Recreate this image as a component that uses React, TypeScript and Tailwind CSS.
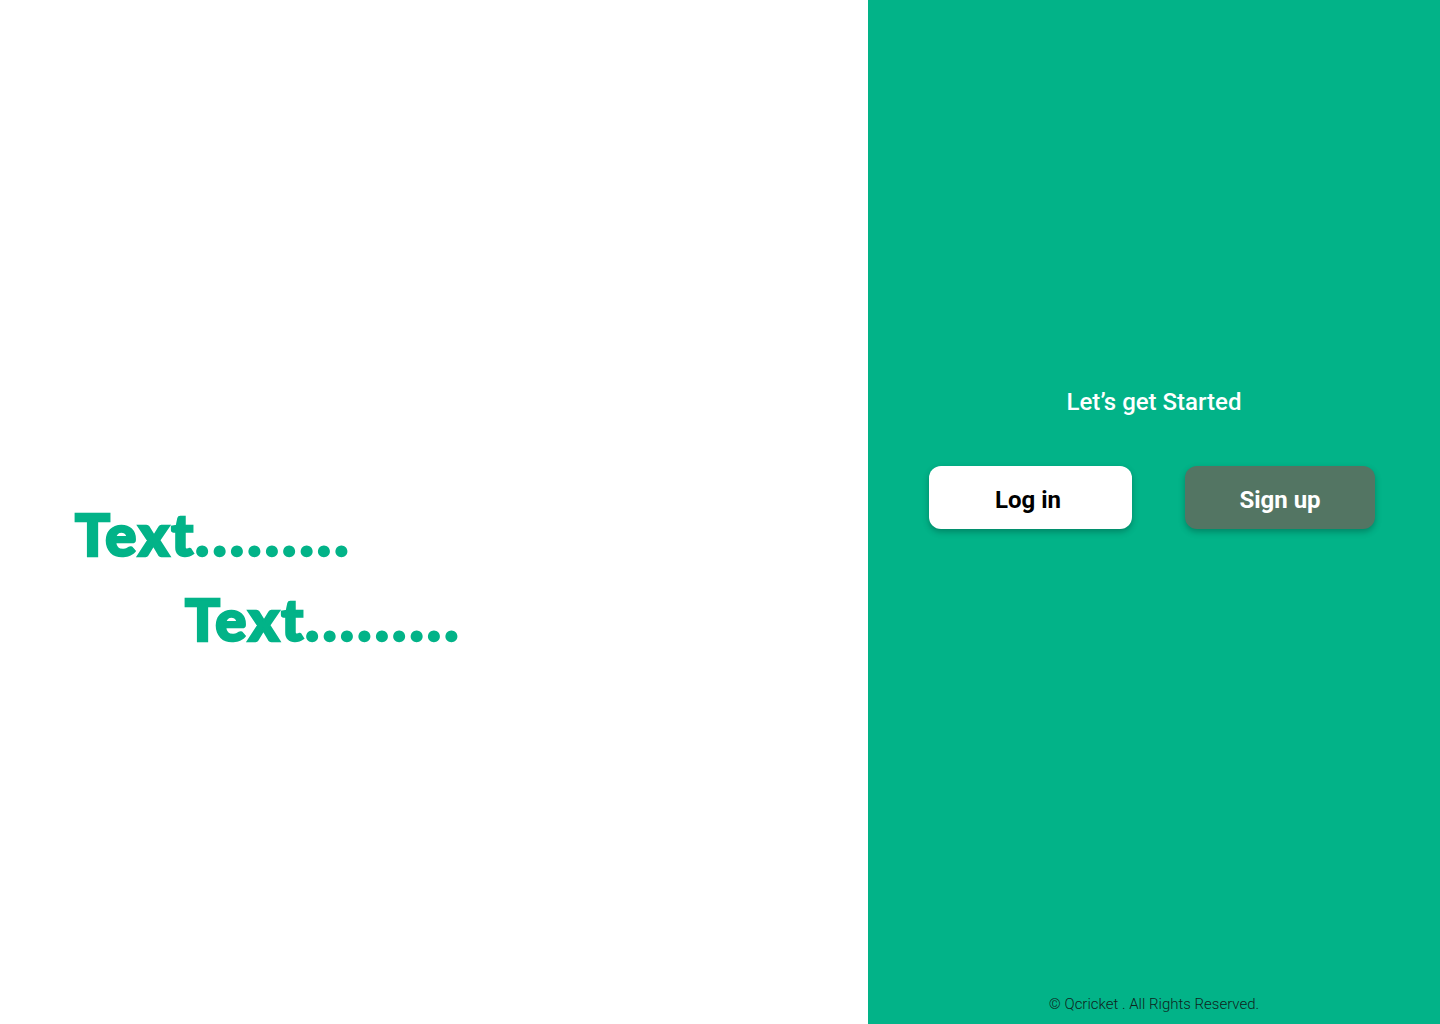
import React from 'react';

const heroFont = { fontFamily: "Lato, 'Noto Sans', sans-serif" };

const HeroLine: React.FC<{ className?: string }> = ({ className = '' }) => (
  <h1
    className={`text-[58px] leading-[66px] font-black text-[#02b388] [-webkit-text-stroke:2.5px_#02b388] ${className}`}
    style={heroFont}
  >
    <span className="tracking-[2.2px]">Text</span>
    <span className="tracking-[3.6px]">.........</span>
  </h1>
);

const App: React.FC = () => {
  return (
    <div className="flex h-[1024px] w-[1440px] bg-white overflow-hidden" style={{ fontFamily: "Roboto, 'Liberation Sans', sans-serif" }}>
      {/* left hero */}
      <div className="flex-1 flex flex-col pt-[501px] pl-[75px]">
        <HeroLine />
        <HeroLine className="mt-[19px] ml-[110px]" />
      </div>

      {/* right panel */}
      <div className="w-[572px] bg-[#02b388] flex flex-col items-center">
        <p className="mt-[386px] text-[24px] leading-[32px] font-medium text-white">Let’s get Started</p>
        <div className="mt-[48px] mr-[4px] flex gap-[53px]">
          <button className="w-[203px] h-[63px] pt-[4px] pr-[5px] rounded-[12px] bg-white text-black text-[24px] font-bold shadow-[0_3px_6px_rgba(0,0,0,0.25)]">
            Log in
          </button>
          <button className="w-[190px] h-[63px] pt-[4px] rounded-[12px] bg-[#537563] text-white text-[24px] font-bold shadow-[0_3px_6px_rgba(0,0,0,0.25)]">
            Sign up
          </button>
        </div>
        <p className="mt-auto mb-[9px] text-[15px] font-light text-[#0f241c]">© Qcricket . All Rights Reserved.</p>
      </div>
    </div>
  );
};

export default App;
